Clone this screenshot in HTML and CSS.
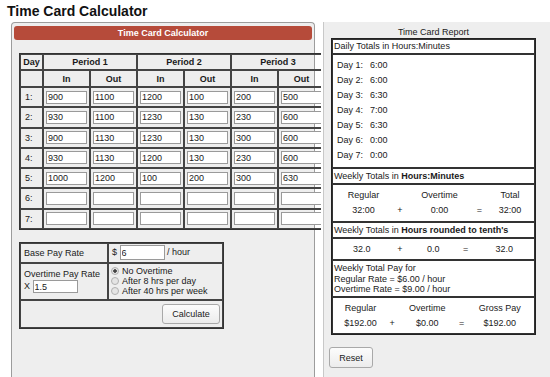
FILE: index.html
```html
<!DOCTYPE html>
<html lang="en">
<head>
  <meta charset="UTF-8">
  <title>Time Card Calculator</title>
  <link rel="stylesheet" href="styles.css">
</head>
<body>
  <h1>Time Card Calculator</h1>

  <div class="layout">
    <div class="calc-col">
      <div class="calc">
        <div class="calc-head">Time Card Calculator</div>

        <table class="times">
          <colgroup>
            <col class="c-day">
            <col class="c-t"><col class="c-t">
            <col class="c-t"><col class="c-t">
            <col class="c-t"><col class="c-t">
          </colgroup>
          <tr class="hrow1">
            <td class="hd">Day</td>
            <td class="hd" colspan="2">Period 1</td>
            <td class="hd" colspan="2">Period 2</td>
            <td class="hd" colspan="2">Period 3</td>
          </tr>
          <tr class="hrow2">
            <td class="hd"></td>
            <td class="hd">In</td><td class="hd">Out</td>
            <td class="hd">In</td><td class="hd">Out</td>
            <td class="hd">In</td><td class="hd">Out</td>
          </tr>
          <tr>
            <td class="dn">1:</td>
            <td><input value="900"></td><td><input value="1100"></td>
            <td><input value="1200"></td><td><input value="100"></td>
            <td><input value="200"></td><td><input value="500"></td>
          </tr>
          <tr>
            <td class="dn">2:</td>
            <td><input value="930"></td><td><input value="1100"></td>
            <td><input value="1230"></td><td><input value="130"></td>
            <td><input value="230"></td><td><input value="600"></td>
          </tr>
          <tr>
            <td class="dn">3:</td>
            <td><input value="900"></td><td><input value="1130"></td>
            <td><input value="1230"></td><td><input value="130"></td>
            <td><input value="300"></td><td><input value="600"></td>
          </tr>
          <tr>
            <td class="dn">4:</td>
            <td><input value="930"></td><td><input value="1130"></td>
            <td><input value="1200"></td><td><input value="130"></td>
            <td><input value="230"></td><td><input value="600"></td>
          </tr>
          <tr>
            <td class="dn">5:</td>
            <td><input value="1000"></td><td><input value="1200"></td>
            <td><input value="100"></td><td><input value="200"></td>
            <td><input value="300"></td><td><input value="630"></td>
          </tr>
          <tr>
            <td class="dn">6:</td>
            <td><input></td><td><input></td>
            <td><input></td><td><input></td>
            <td><input></td><td><input></td>
          </tr>
          <tr>
            <td class="dn">7:</td>
            <td><input></td><td><input></td>
            <td><input></td><td><input></td>
            <td><input></td><td><input></td>
          </tr>
        </table>

        <table class="rates">
          <colgroup>
            <col class="c-lbl">
            <col class="c-opt">
          </colgroup>
          <tr class="r1">
            <td>Base Pay Rate</td>
            <td>$ <input class="rate-in" value="6"> / hour</td>
          </tr>
          <tr class="r2">
            <td>
              <div class="ln">Overtime Pay Rate</div>
              <div>X <input class="ot-in" value="1.5"></div>
            </td>
            <td>
              <label class="opt"><input class="radio" type="radio" name="ot" checked>No Overtime</label>
              <label class="opt"><input class="radio" type="radio" name="ot">After 8 hrs per day</label>
              <label class="opt"><input class="radio" type="radio" name="ot">After 40 hrs per week</label>
            </td>
          </tr>
          <tr class="r3">
            <td colspan="2" class="act"><button class="btn calc-btn">Calculate</button></td>
          </tr>
        </table>
      </div>
    </div>

    <div class="report-col">
      <div class="report">
        <div class="rep-title">Time Card Report</div>
        <div class="rep-box">
          <div class="sec s-head1">Daily Totals in Hours:Minutes</div>
          <div class="sec s-days">
            <div class="day"><span class="dl">Day 1:</span>6:00</div>
            <div class="day"><span class="dl">Day 2:</span>6:00</div>
            <div class="day"><span class="dl">Day 3:</span>6:30</div>
            <div class="day"><span class="dl">Day 4:</span>7:00</div>
            <div class="day"><span class="dl">Day 5:</span>6:30</div>
            <div class="day"><span class="dl">Day 6:</span>0:00</div>
            <div class="day"><span class="dl">Day 7:</span>0:00</div>
          </div>
          <div class="sec s-head">Weekly Totals in <b>Hours:Minutes</b></div>
          <div class="sec s-vals vals v-hm">
            <span>Regular</span><span></span><span>Overtime</span><span></span><span>Total</span>
            <span>32:00</span><span>+</span><span>0:00</span><span>=</span><span>32:00</span>
          </div>
          <div class="sec s-head">Weekly Totals in <b>Hours rounded to tenth's</b></div>
          <div class="sec s-tenth vals v-tenth">
            <span>32.0</span><span>+</span><span>0.0</span><span>=</span><span>32.0</span>
          </div>
          <div class="sec s-text">
            Weekly Total Pay for<br>
            Regular Rate = $6.00 / hour<br>
            Overtime Rate = $9.00 / hour
          </div>
          <div class="sec s-vals vals v-pay">
            <span>Regular</span><span></span><span>Overtime</span><span></span><span>Gross Pay</span>
            <span>$192.00</span><span>+</span><span>$0.00</span><span>=</span><span>$192.00</span>
          </div>
        </div>
      </div>
      <button class="btn reset-btn">Reset</button>
    </div>
  </div>
</body>
</html>
```

FILE: styles.css
```css
body {
  margin: 0;
  padding: 0 0 0 7px;
  font-family: "Liberation Sans", Arial, sans-serif;
  font-size: 9px;
  color: #1a1a1a;
  background: #fff;
  overflow: hidden;
}
h1 {
  font-size: 14px;
  line-height: 16px;
  margin: 0;
  padding: 3px 0;
  color: #111;
}
input, button {
  font-family: "Liberation Sans", Arial, sans-serif;
  font-size: 9px;
  color: #1a1a1a;
}
.layout {
  display: flex;
  align-items: flex-start;
  margin-left: 4px;
}

/* left side */
.calc-col {
  flex: none;
  width: 310px;
  height: 360px;
  overflow: hidden;
}
.calc {
  width: 304px;
  height: 360px;
  box-sizing: border-box;
  border: 1px solid #9c9c9c;
  border-bottom: none;
  border-radius: 4px 4px 0 0;
  background: #eee;
  padding: 3px 2px 0;
}
.calc-head {
  height: 14px;
  line-height: 14px;
  background: #b64b3a;
  color: #fff;
  font-weight: bold;
  text-align: center;
  border-radius: 3px;
}
.times {
  margin: 13px 0 0 5px;
  width: 307px;
  table-layout: fixed;
  border-collapse: separate;
  border-spacing: 0;
  border: 1px solid #333;
}
.c-day { width: 23px; }
.c-t { width: 47px; }
.times td {
  box-sizing: border-box;
  border: 1px solid #444;
  padding: 0;
  height: 20.25px;
  vertical-align: middle;
}
.times .hrow1 td { height: 16px; }
.times .hrow2 td { height: 17px; }
.times .hd {
  font-weight: bold;
  text-align: center;
}
.times .dn {
  padding-left: 4px;
}
.times input {
  display: block;
  box-sizing: border-box;
  width: 41px;
  height: 13px;
  margin: 0 auto;
  padding: 0 1px;
  border: 1px solid #9a9a9a;
  background: #fff;
}

.rates {
  margin: 12px 0 0 5px;
  width: 205px;
  table-layout: fixed;
  border-collapse: separate;
  border-spacing: 0;
  border: 1px solid #333;
}
.c-lbl { width: 88px; }
.c-opt { width: 115px; }
.rates td {
  box-sizing: border-box;
  border: 1px solid #444;
  padding: 0 0 0 3px;
  vertical-align: middle;
}
.rates .r1 td { height: 20px; }
.rates .r2 td { height: 37px; }
.rates .r3 td { height: 28px; }
.rates .r2 td + td { padding-left: 2px; }
.ln { line-height: 10px; margin-bottom: 1px; }
.rate-in, .ot-in {
  box-sizing: border-box;
  width: 45px;
  padding: 0 1px;
  margin: 0;
  border: 1px solid #9a9a9a;
  background: #fff;
  vertical-align: middle;
}
.rate-in { height: 15px; }
.ot-in { height: 13px; }
.opt {
  display: block;
  line-height: 10px;
  white-space: nowrap;
}
.radio {
  appearance: none;
  box-sizing: border-box;
  width: 8px;
  height: 8px;
  margin: 0 3px 0 0;
  border: 1px solid #b0b0b0;
  border-radius: 50%;
  background: #e4e4e4;
  vertical-align: -1px;
}
.radio:checked {
  background: radial-gradient(circle, #444 0 1.5px, #e4e4e4 2px);
}
.rates .act {
  text-align: right;
  padding: 0 2px 0 0;
}
.btn {
  box-sizing: border-box;
  border: 1px solid #a9a9a9;
  border-radius: 3px;
  background: linear-gradient(#fcfcfc, #ececec);
  padding: 0;
  margin: 0;
  vertical-align: middle;
}
.calc-btn {
  width: 58px;
  height: 20px;
}

/* right side */
.report-col {
  flex: 1;
  height: 360px;
  margin-left: 2px;
  padding-left: 5px;
  border-left: 1px solid #c8c8c8;
  background: #eee;
}
.report {
  width: 205px;
  margin-left: 2px;
}
.rep-title {
  padding-top: 5px;
  line-height: 11px;
  text-align: center;
}
.rep-box {
  box-sizing: border-box;
  border: 1px solid #222;
  background: #fff;
}
.sec {
  border: 1px solid #333;
  padding-left: 1px;
}
.s-head1 { line-height: 13px; }
.s-head { line-height: 14px; }
.s-days {
  padding: 3px 0 4px 4px;
}
.day { line-height: 15px; }
.dl {
  display: inline-block;
  width: 33px;
}
.vals {
  display: grid;
  text-align: center;
  padding-left: 0;
}
.s-vals {
  line-height: 15px;
  padding-top: 3px;
  padding-bottom: 3px;
}
.v-pay {
  padding-top: 2.5px;
  padding-bottom: 2.5px;
}
.s-tenth { line-height: 20px; }
.v-hm { grid-template-columns: 61px 12px 67px 13px 48px; }
.v-tenth { grid-template-columns: 57.5px 19px 47.5px 17.5px 59.5px; }
.v-pay { grid-template-columns: 55px 8.5px 61.5px 7.5px 68.5px; }
.s-text {
  line-height: 10.5px;
  padding-top: 2px;
  padding-bottom: 1.5px;
}
.reset-btn {
  display: block;
  width: 44px;
  height: 21px;
  margin-top: 12px;
}
```
